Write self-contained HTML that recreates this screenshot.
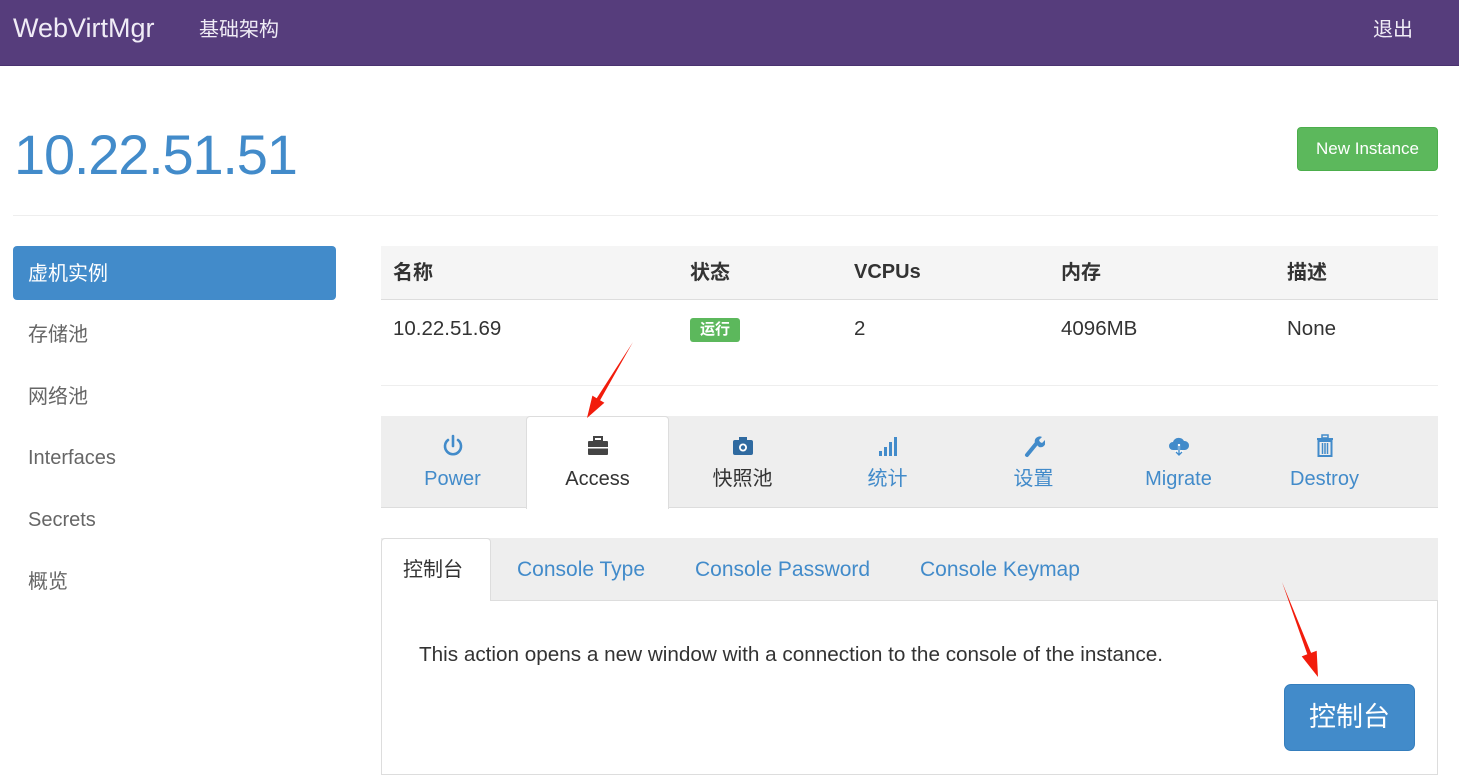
<!DOCTYPE html>
<html><head><meta charset="utf-8"><style>
*{margin:0;padding:0;box-sizing:border-box}
body{width:1459px;height:784px;overflow:hidden;background:#fff;font-family:"Liberation Sans","Noto Sans CJK SC",sans-serif;color:#333;position:relative}
.a{position:absolute;white-space:nowrap;line-height:1.15}
.nav{position:absolute;left:0;top:0;width:1459px;height:66px;background:#563d7c;border-bottom:1px solid #4a3270}
.blue{color:#428bca}
.side{font-size:20px;color:#666}
.th{font-size:20px;font-weight:bold;color:#333}
.td{font-size:20.5px;color:#333}
.tab{position:absolute;top:416px;width:145px;height:92px;text-align:center;color:#428bca;font-size:20px;line-height:24px}
.tab svg{display:block;margin:18px auto 0}
.tab span{display:block;margin-top:9px;height:24px}
.st{font-size:21px;color:#428bca;top:558px}
</style></head><body>
<div class="nav"></div>
<div class="a" style="left:13px;top:13px;font-size:27px;color:#f0ecf6">WebVirtMgr</div>
<div class="a" style="left:199px;top:19px;font-size:20px;color:#f0ecf6">基础架构</div>
<div class="a" style="left:1373px;top:19px;font-size:20px;color:#f0ecf6">退出</div>

<div class="a blue" style="left:14px;top:123px;font-size:56px;letter-spacing:-1.2px">10.22.51.51</div>
<div class="a" style="left:1297px;top:127px;width:141px;height:44px;background:#5cb85c;border:1px solid #4cae4c;border-radius:4px;color:#fff;font-size:17px;text-align:center;line-height:42px">New Instance</div>
<div class="a" style="left:13px;top:215px;width:1425px;height:1px;background:#eee"></div>

<div class="a" style="left:13px;top:246px;width:323px;height:54px;background:#428bca;border-radius:4px"></div>
<div class="a" style="left:28px;top:263px;font-size:20px;color:#fff">虚机实例</div>
<div class="a side" style="left:28px;top:324px">存储池</div>
<div class="a side" style="left:28px;top:386px">网络池</div>
<div class="a side" style="left:28px;top:447px">Interfaces</div>
<div class="a side" style="left:28px;top:509px">Secrets</div>
<div class="a side" style="left:28px;top:571px">概览</div>

<div class="a" style="left:381px;top:246px;width:1057px;height:54px;background:#f5f5f5;border-bottom:1px solid #ddd"></div>
<div class="a th" style="left:393px;top:262px">名称</div>
<div class="a th" style="left:690px;top:262px">状态</div>
<div class="a th" style="left:854px;top:261px">VCPUs</div>
<div class="a th" style="left:1061px;top:262px">内存</div>
<div class="a th" style="left:1287px;top:262px">描述</div>
<div class="a td" style="left:393px;top:317px">10.22.51.69</div>
<div class="a" style="left:690px;top:318px;width:50px;height:24px;background:#5cb85c;border-radius:3px;color:#fff;font-size:15px;font-weight:bold;text-align:center;line-height:24px">运行</div>
<div class="a td" style="left:854px;top:317px">2</div>
<div class="a td" style="left:1061px;top:317px">4096MB</div>
<div class="a td" style="left:1287px;top:317px">None</div>
<div class="a" style="left:381px;top:385px;width:1057px;height:1px;background:#eee"></div>

<div class="a" style="left:381px;top:416px;width:1057px;height:92px;background:#eee;border-bottom:1px solid #ddd"></div>
<div class="tab" style="left:380px"><svg width="22" height="24" viewBox="0 0 22 24"><path d="M6 6a8 8 0 1 0 10 0" fill="none" stroke="#428bca" stroke-width="2.6" stroke-linecap="round"/><path d="M11 2v10" stroke="#428bca" stroke-width="2.6" stroke-linecap="round"/></svg><span>Power</span></div>
<div class="tab" style="left:526px;width:143px;background:#fff;border:1px solid #ddd;border-bottom:none;border-radius:4px 4px 0 0;height:93px;color:#333"><svg width="22" height="24" viewBox="0 0 22 24" style="margin-top:17px"><rect x="7" y="3" width="8" height="4" fill="none" stroke="#444" stroke-width="2"/><rect x="1" y="7" width="20" height="14" rx="1" fill="#444"/><rect x="1" y="13" width="20" height="1.5" fill="#fff"/></svg><span>Access</span></div>
<div class="tab" style="left:670px;color:#333"><svg width="22" height="24" viewBox="0 0 22 24"><rect x="1" y="6" width="20" height="15" rx="2" fill="#2f6aa0"/><rect x="7" y="3" width="8" height="4" fill="#2f6aa0"/><circle cx="11" cy="13.5" r="4" fill="#fff"/><circle cx="11" cy="13.5" r="2.2" fill="#2f6aa0"/></svg><span>快照池</span></div>
<div class="tab" style="left:815px"><svg width="22" height="24" viewBox="0 0 22 24"><rect x="2" y="17" width="3" height="5" fill="#428bca"/><rect x="7" y="13" width="3" height="9" fill="#428bca"/><rect x="12" y="8" width="3" height="14" fill="#428bca"/><rect x="17" y="3" width="3" height="19" fill="#428bca"/></svg><span>统计</span></div>
<div class="tab" style="left:961px"><svg width="22" height="24" viewBox="0 0 22 24"><path d="M4 21L13 10" stroke="#428bca" stroke-width="4" stroke-linecap="round"/><path d="M12 9a5 5 0 0 1 7-6l-3 3 1 2 2 1 3-3a5 5 0 0 1-6 7z" fill="#428bca"/></svg><span>设置</span></div>
<div class="tab" style="left:1106px"><svg width="24" height="24" viewBox="0 0 24 24"><path d="M6 16a4 4 0 0 1 0-8 6 6 0 0 1 11-1 4.5 4.5 0 0 1 1 9z" fill="#428bca"/><path d="M12 10v11M8.5 17l3.5 4 3.5-4" fill="none" stroke="#fff" stroke-width="2.2"/><path d="M12 12v9M9 18l3 3 3-3" fill="none" stroke="#428bca" stroke-width="1.4"/></svg><span>Migrate</span></div>
<div class="tab" style="left:1252px"><svg width="22" height="24" viewBox="0 0 22 24"><rect x="3" y="4" width="16" height="2" fill="#428bca"/><rect x="8" y="1" width="6" height="3" fill="none" stroke="#428bca" stroke-width="1.5"/><rect x="4.5" y="7" width="13" height="15" fill="none" stroke="#428bca" stroke-width="2"/><path d="M8.5 9v11M11 9v11M13.5 9v11" stroke="#428bca" stroke-width="1.5"/></svg><span>Destroy</span></div>

<div class="a" style="left:381px;top:538px;width:1057px;height:63px;background:#eee;border-bottom:1px solid #ddd"></div>
<div class="a" style="left:381px;top:538px;width:110px;height:63px;background:#fff;border:1px solid #ddd;border-bottom:none;border-radius:4px 4px 0 0"></div>
<div class="a" style="left:403px;top:559px;font-size:20px;color:#333">控制台</div>
<div class="a st" style="left:517px">Console Type</div>
<div class="a st" style="left:695px">Console Password</div>
<div class="a st" style="left:920px">Console Keymap</div>
<div class="a" style="left:381px;top:600px;width:1057px;height:175px;border:1px solid #ddd;border-top:none"></div>
<div class="a" style="left:419px;top:643px;font-size:20.7px;color:#333">This action opens a new window with a connection to the console of the instance.</div>
<div class="a" style="left:1284px;top:684px;width:131px;height:67px;background:#428bca;border:1px solid #357ebd;border-radius:7px;color:#fff;font-size:27px;text-align:center;line-height:64px">控制台</div>

<svg class="a" style="left:0;top:0" width="1459" height="784"><polygon points="633,342 600.1,400.2 604.4,402.8 587,418 592.4,395.6 596.7,398.2" fill="#f21c0c"/><polygon points="1282,582 1311.1,652.9 1316.7,650.8 1318,677 1301.7,656.4 1307.3,654.3" fill="#f21c0c"/></svg>
</body></html>
